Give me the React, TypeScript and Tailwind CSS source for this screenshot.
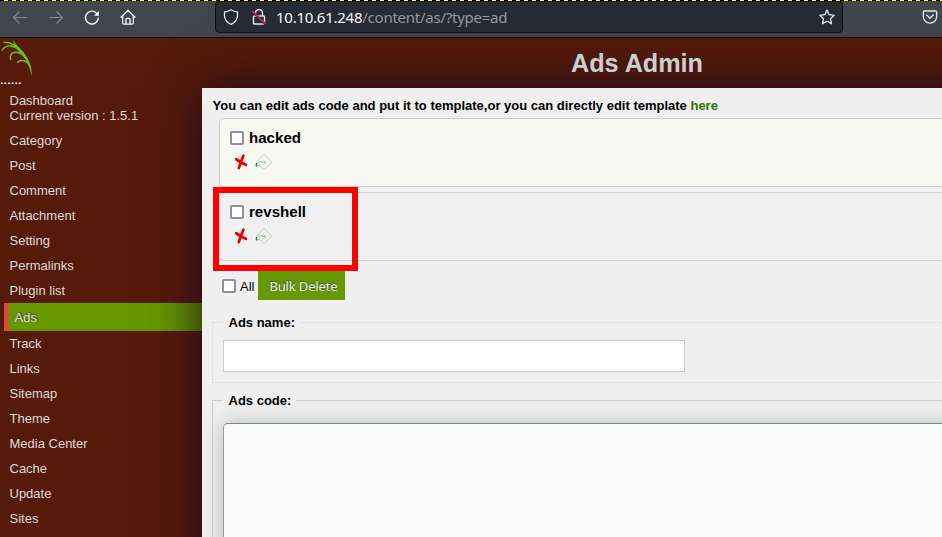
import React from "react";

const before = ["Category", "Post", "Comment", "Attachment", "Setting", "Permalinks", "Plugin list"];
const after = ["Track", "Links", "Sitemap", "Theme", "Media Center", "Cache", "Update", "Sites"];

function Box() {
  return <span className="block h-[14px] w-[14px] shrink-0 rounded-[2px] border-2 border-[#8f8f9d] bg-white" />;
}

function Toolbar() {
  return (
    <div className="flex h-[38px] flex-col border-b border-[#0c0c0d] bg-[#42454c]">
      <div className="h-px shrink-0 bg-[repeating-linear-gradient(90deg,#000_0_4px,#ffff00_4px_8px)]" />
      <div className="flex h-8 items-center">
        <svg className="ml-3 h-4 w-4" viewBox="0 0 16 16" fill="none" stroke="#84868a" strokeWidth="1.2" strokeLinecap="round" strokeLinejoin="round">
          <path d="M14.5 8.500H1.500M7 3 1.500 8.500 7 14" />
        </svg>
        <svg className="ml-5 h-4 w-4" viewBox="0 0 16 16" fill="none" stroke="#84868a" strokeWidth="1.2" strokeLinecap="round" strokeLinejoin="round">
          <path d="M1.500 8.500h13M9 3 14.500 8.500 9 14" />
        </svg>
        <svg className="ml-5 h-4 w-4" viewBox="0 0 16 16" fill="none" stroke="#fbfbfe" strokeWidth="1.4" strokeLinecap="round">
          <path d="M14.3 9.100A6.4 6.4 0 1 1 11.8 3.500L13 4.500" />
          <path d="M15 1.800v5H10z" fill="#fbfbfe" stroke="none" />
        </svg>
        <svg className="ml-[19.500px] h-4 w-4" viewBox="0 0 16 16" fill="none" stroke="#fbfbfe" strokeWidth="1.3" strokeLinecap="round" strokeLinejoin="round">
          <path d="M1 8.300 8 1.300l7 7M2.7 7.300v6.5a1.3 1.3 0 0 0 1.3 1.3h8a1.3 1.3 0 0 0 1.3-1.3v-6.5M6 14.8V10.300a1 1 0 0 1 1-1h2a1 1 0 0 1 1 1v4.5" />
        </svg>
        <div className="ml-[79.500px] flex h-8 w-[628px] items-center rounded-[4px] border border-[#101116] bg-[#282a36]">
          <svg className="ml-[7px] h-4 w-4" viewBox="0 0 16 16" fill="none" stroke="#e8e8ee" strokeWidth="1.3" strokeLinejoin="round">
            <path d="M8 .8C6 2.200 4 2.800 1.500 3v3.500c0 4 2.500 7 6.500 8.800 4-1.800 6.500-4.800 6.500-8.800V3C12 2.800 10 2.200 8 .8z" />
          </svg>
          <svg className="ml-[12px] h-4 w-4" viewBox="0 0 16 16" fill="none" stroke="#e8e8ee" strokeWidth="1.4" strokeLinejoin="round">
            <path d="M4.500 7V4a3.500 3.500 0 0 1 7 0v3M3.500 7h9a1 1 0 0 1 1 1v6a1 1 0 0 1-1 1h-9a1 1 0 0 1-1-1V8a1 1 0 0 1 1-1z" />
            <path d="M.8 2 14.500 15.300" stroke="#282a36" strokeWidth="2.400" />
            <path d="M1 2 14.500 15" stroke="#e22850" strokeWidth="1.400" />
          </svg>
          <span className="ml-[9px] whitespace-nowrap font-['Noto_Sans',sans-serif] text-[15px] leading-5 tracking-[-0.25px] text-[#98989f]">
            <span className="text-[#fbfbfe]">10.10.61.248</span>/content/as/?type=ad
          </span>
          <svg className="ml-auto mr-[7px] h-4 w-4" viewBox="0 0 16 16" fill="none" stroke="#e8e8ee" strokeWidth="1.3" strokeLinejoin="round">
            <path d="M8 1 10.100 5.700 15.200 6.300 11.400 9.700 12.500 14.800 8 12.200 3.500 14.800 4.600 9.700 .8 6.300 5.900 5.700z" />
          </svg>
        </div>
        <svg className="ml-[79px] h-4 w-4" viewBox="0 0 16 16" fill="none" stroke="#e8e8ee" strokeWidth="1.3" strokeLinecap="round" strokeLinejoin="round">
          <path d="M2.500 2h11a1.200 1.200 0 0 1 1.200 1.200V7.500a6.700 6.700 0 0 1-13.400 0V3.200A1.200 1.200 0 0 1 2.500 2zM4.700 6 8 9.200 11.300 6" />
        </svg>
      </div>
    </div>
  );
}

function Row({ name }: { name: string }) {
  return <div className="h-[25px] pl-[9.5px] leading-[25px]">{name}</div>;
}

function AdCard({ name, tone }: { name: string; tone: string }) {
  return (
    <div className={`ml-[7px] h-[69px] w-[800px] rounded-[5px] border border-[#ccc] pl-[10px] pt-[9px] ${tone}`}>
      <div className="flex h-5 items-center gap-[5px] text-[15.1px] font-bold">
        <Box />
        {name}
      </div>
      <div className="flex h-[28px] items-center pl-[4px]">
        <svg className="h-4 w-[14px]" viewBox="0 0 14 16" fill="none" stroke="#e60000" strokeLinecap="round">
          <path d="M2.300 5.200 6.700 8.300 11.800 10.800" strokeWidth="2.900" />
          <path d="M9.400 1.700C8 5 6.500 9 4.800 14" strokeWidth="2.700" />
        </svg>
        <svg className="ml-[7px] h-[18px] w-[18px]" viewBox="0 0 18 18" fill="none">
          <path d="M1.500 9 9 1.500 16.800 9 9 16.800 4.500 12.500" stroke="#bccbbc" />
          <path d="M1.500 10 5 8.500h2.500M4.500 9.500v3H2.500" stroke="#b5cab5" />
          <path d="M1.500 10v3.500" stroke="#337a37" strokeWidth="1.500" />
          <path d="M6.500 9.500h4M8.500 7.500l2.500 2-2.500 2" stroke="#a5c2a5" strokeWidth=".9" />
        </svg>
      </div>
    </div>
  );
}

export default function App() {
  return (
    <div className="relative h-[537px] w-[942px] overflow-hidden bg-[#561a0a] font-['Liberation_Sans',Arial,sans-serif] text-[13px] text-black">
      <Toolbar />
      <div className="flex">
        <aside className="w-[202px] shrink-0 text-[#dfd9d6]">
          <svg className="h-[38px] w-[36px]" viewBox="0 0 36 38" fill="none" stroke="#68bd16" strokeLinecap="round">
            <path d="M13 1C15 6 18 8 21 12c6 6 11 14 11 26C29 28 27 22 22 17 18 13 14 7 13 1z" fill="#68bd16" stroke="none" />
            <path d="M4 4.300C11 4.500 16 6.500 20 12" strokeWidth="1.400" />
            <path d="M2.300 12C5 7 13 6 20 12.500" strokeWidth="1.500" />
            <path d="M10.600 21.500C9 14 16 11.500 24 18" strokeWidth="1.500" />
            <path d="M17.500 24.300c3-3 9-2.500 12.500 4" strokeWidth="1.500" />
            <path d="M12 8C18 9 22 13 26 20" strokeWidth="2.200" />
          </svg>
          <div className="-mt-[4px] h-[21px] leading-[15px] text-white [text-shadow:0_0_1px_#fff]">......</div>
          <div className="h-[35px] pl-[9.500px] leading-[15px]">Dashboard<br />Current version : 1.5.1</div>
          {before.map((n) => <Row key={n} name={n} />)}
          <div className="ml-1 h-7 border-l-[5px] border-[#dd4b39] bg-[#669900] pl-[5.500px] pt-px leading-7 [text-shadow:1px_-1px_1px_#444]">Ads</div>
          {after.map((n) => <Row key={n} name={n} />)}
        </aside>
        <div className="w-[900px] shrink-0">
          <h1 className="h-[50px] pl-[369px] text-[25.2px] font-bold leading-[50px] text-[#d0cdcd] [text-shadow:0_-1px_1px_#333]">Ads Admin</h1>
          <main className="h-[600px] bg-[#efefef] pl-[10px] pt-[10px] shadow-[0_0_50px_#1c0a1c]">
            <p className="h-[20px] pl-[0.5px] font-bold leading-[15px]">
              You can edit ads code and put it to template,or you can directly edit template <span className="text-[#347000]">here</span>
            </p>
            <AdCard name="hacked" tone="bg-[#f7f8f1]" />
            <div className="h-[5px]" />
            <AdCard name="revshell" tone="bg-[#f0f0f0]" />
            <div className="mt-[10px] flex h-[29px] items-center pl-[10px]">
              <Box />
              <span className="ml-[4px] pt-[2px]">All</span>
              <span className="ml-[4px] flex h-[29px] w-[87px] items-center justify-center bg-[#669900] pl-[3px] pt-[2px] font-['Noto_Sans',sans-serif] text-[13px] tracking-[-0.15px] text-[#eee] [text-shadow:0_-1px_1px_#444]">Bulk Delete</span>
            </div>
            <fieldset className="mt-[15px] h-[68px] w-[800px] border border-dotted border-[#d8d8d8] pl-[10px]">
              <legend className="px-[5.5px] font-bold leading-[15px]">Ads name:</legend>
              <div className="mt-[10px] h-8 w-[462px] border border-[#ccc] bg-white" />
            </fieldset>
            <fieldset className="mt-[10px] h-[300px] w-[800px] border border-[#ccc] pl-[10px]">
              <legend className="pl-[5.5px] pr-[4.5px] font-bold leading-[15px]">Ads code:</legend>
              <div className="mt-[15px] h-[260px] w-[760px] rounded-[5px] border border-[#999] border-t-[#6d8f6d] bg-[#fafafa] shadow-[0_0_20px_#bbb]" />
            </fieldset>
          </main>
        </div>
      </div>
      <div className="absolute left-[213px] top-[187px] h-[84px] w-[145px] border-[6px] border-[#ff0000]" />
    </div>
  );
}
